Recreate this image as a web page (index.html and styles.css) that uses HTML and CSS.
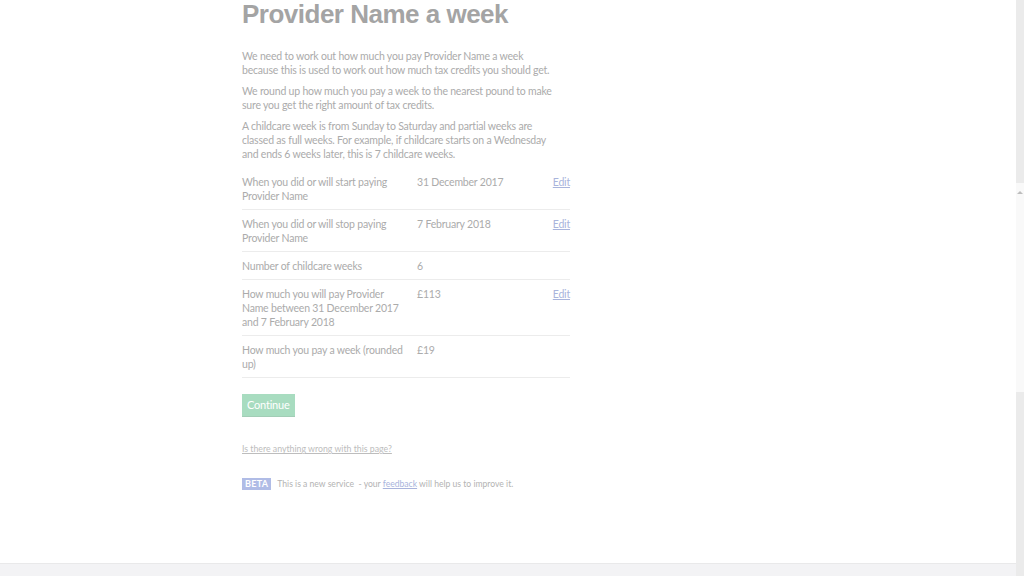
FILE: index.html
```html
<!DOCTYPE html>
<html lang="en">
<head>
<meta charset="utf-8">
<title>Provider Name a week</title>
<link rel="stylesheet" href="styles.css">
</head>
<body>
<div class="page">
  <main class="main">
    <h1 class="title">How much are you paying<br>Provider Name a week</h1>
    <p class="body-text">We need to work out how much you pay Provider Name a week because this is used to work out how much tax credits you should get.</p>
    <p class="body-text">We round up how much you pay a week to the nearest pound to make sure you get the right amount of tax credits.</p>
    <p class="body-text">A childcare week is from Sunday to Saturday and partial weeks are classed as full weeks. For example, if childcare starts on a Wednesday and ends 6 weeks later, this is 7 childcare weeks.</p>

    <dl class="summary">
      <div class="row">
        <dt class="key">When you did or will start paying Provider Name</dt>
        <dd class="value">31 December 2017</dd>
        <dd class="action"><a class="link" href="#">Edit</a></dd>
      </div>
      <div class="row">
        <dt class="key">When you did or will stop paying Provider Name</dt>
        <dd class="value">7 February 2018</dd>
        <dd class="action"><a class="link" href="#">Edit</a></dd>
      </div>
      <div class="row">
        <dt class="key">Number of childcare weeks</dt>
        <dd class="value">6</dd>
        <dd class="action"></dd>
      </div>
      <div class="row">
        <dt class="key">How much you will pay Provider Name between 31 December 2017 and 7 February 2018</dt>
        <dd class="value">£113</dd>
        <dd class="action"><a class="link" href="#">Edit</a></dd>
      </div>
      <div class="row">
        <dt class="key">How much you pay a week (rounded up)</dt>
        <dd class="value">£19</dd>
        <dd class="action"></dd>
      </div>
    </dl>

    <button class="button" type="button">Continue</button>

    <a class="report" href="#">Is there anything wrong with this page?</a>

    <div class="beta">
      <span class="tag">BETA</span>
      <span class="beta-text">This is a new service &nbsp;- your <a class="link" href="#">feedback</a> will help us to improve it.</span>
    </div>
  </main>
  <footer class="footer"></footer>
</div>
<div class="scrollbar">
  <div class="thumb"><span class="arrow"></span></div>
</div>
</body>
</html>
```
FILE: styles.css
```css
html, body {
  margin: 0;
  padding: 0;
  height: 100%;
  overflow: hidden;
  background: #ffffff;
}

body {
  display: flex;
  width: 1024px;
  height: 576px;
  font-family: Lato, "Liberation Sans", Arial, sans-serif;
  color: #ababab;
}

.page {
  flex: 1;
  display: flex;
  flex-direction: column;
  min-width: 0;
}

.main {
  flex: 1;
  width: 328px;
  margin: -31px 0 0 242px;
  min-height: 0;
}

.title {
  font-family: "Liberation Sans", Arial, sans-serif;
  font-weight: 700;
  font-size: 26px;
  line-height: 30px;
  letter-spacing: -0.5px;
  color: #a4a4a4;
  margin: 0 0 20px;
}

.body-text {
  font-size: 10.5px;
  letter-spacing: -0.2px;
  line-height: 14px;
  margin: 0 0 7px;
  max-width: 318px;
}

.summary {
  margin: 0 0 16px;
}

.row {
  display: grid;
  grid-template-columns: 166px 1fr auto;
  column-gap: 9px;
  padding: 7px 0 6px;
  border-bottom: 1px solid #ececec;
  font-size: 10.5px;
  letter-spacing: -0.2px;
  line-height: 14px;
}

.key, .value, .action {
  margin: 0;
}

.action {
  text-align: right;
}

.link {
  color: #a9b4dc;
  text-decoration: underline;
}

.button {
  display: block;
  font-family: inherit;
  font-size: 11px;
  letter-spacing: -0.2px;
  line-height: 16px;
  padding: 3px 5px;
  border: 0;
  border-radius: 0;
  color: #ffffff;
  background: #a8dcc0;
  box-shadow: 0 1px 0 #a2cdb6;
}

.report {
  display: block;
  margin-top: 26px;
  font-size: 8.75px;
  line-height: 14px;
  color: #bdbdbd;
  text-decoration: underline;
}

.beta {
  display: flex;
  align-items: center;
  margin-top: 21px;
  font-size: 8.6px;
  line-height: 14px;
  color: #b3b3b3;
}

.tag {
  font-weight: 700;
  font-size: 9px;
  line-height: 12px;
  letter-spacing: 0.3px;
  padding: 0 3px;
  margin-right: 6px;
  color: #ffffff;
  background: #b0bce6;
}

.footer {
  height: 12px;
  border-top: 1px solid #e9e9ea;
  background: #f3f3f5;
  flex: none;
}

.scrollbar {
  width: 8px;
  flex: none;
  background: #ebebeb;
  display: flex;
  flex-direction: column;
}

.thumb {
  margin-top: 183px;
  height: 209px;
  background: #f9f9f9;
  display: flex;
  justify-content: center;
}

.arrow {
  margin-top: 8px;
  width: 0;
  height: 0;
  border-left: 3px solid transparent;
  border-right: 3px solid transparent;
  border-bottom: 3px solid #bdbdbd;
}
```
